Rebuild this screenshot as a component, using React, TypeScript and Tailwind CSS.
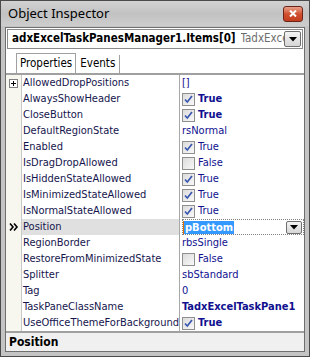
import React from 'react';

type Row = {
  name: string;
  value: string;
  check?: boolean;
  bold?: boolean;
  expand?: boolean;
  selected?: boolean;
};

const rows: Row[] = [
  { name: 'AllowedDropPositions', value: '[]', expand: true },
  { name: 'AlwaysShowHeader', value: 'True', check: true, bold: true },
  { name: 'CloseButton', value: 'True', check: true, bold: true },
  { name: 'DefaultRegionState', value: 'rsNormal' },
  { name: 'Enabled', value: 'True', check: true },
  { name: 'IsDragDropAllowed', value: 'False', check: false },
  { name: 'IsHiddenStateAllowed', value: 'True', check: true },
  { name: 'IsMinimizedStateAllowed', value: 'True', check: true },
  { name: 'IsNormalStateAllowed', value: 'True', check: true },
  { name: 'Position', value: 'pBottom', selected: true },
  { name: 'RegionBorder', value: 'rbsSingle' },
  { name: 'RestoreFromMinimizedState', value: 'False', check: false },
  { name: 'Splitter', value: 'sbStandard' },
  { name: 'Tag', value: '0' },
  { name: 'TaskPaneClassName', value: 'TadxExcelTaskPane1', bold: true },
  { name: 'UseOfficeThemeForBackground', value: 'True', check: true, bold: true },
];

const font = { fontFamily: '"DejaVu Sans Condensed", "DejaVu Sans", sans-serif' };

const CheckBox = ({ on }: { on: boolean }) => (
  <span className="w-[13px] h-[13px] border border-[#8f8f8f] bg-gradient-to-br from-[#dcdcdc] to-[#f8f8f8] flex items-center justify-center shrink-0">
    {on && (
      <svg width="9" height="9" viewBox="0 0 9 9">
        <path d="M1 4.5 L3.3 7 L8 1" stroke="#3a57b0" strokeWidth="1.7" fill="none" />
      </svg>
    )}
  </span>
);

const DropBtn = ({ className }: { className: string }) => (
  <span
    className={`flex items-center justify-center border border-[#707070] rounded-[2px] bg-gradient-to-b from-[#f4f4f4] to-[#d6d6d6] ${className}`}
  >
    <svg width="8" height="5" viewBox="0 0 8 5">
      <path d="M0 0 H8 L4 4.5 Z" fill="#000" />
    </svg>
  </span>
);

export default function App() {
  return (
    <div
      className="w-[310px] h-[357px] bg-[#c4c4c4] border border-[#4a4a4a] flex flex-col overflow-hidden"
      style={font}
    >
      {/* Title bar */}
      <div className="h-[25px] shrink-0 flex items-center justify-between pl-[7px] pr-[6px] bg-gradient-to-b from-[#d2d2d2] via-[#c2c2c2] to-[#cdcdcd]">
        <span className="text-[13px] text-black" style={{ fontFamily: '"Noto Sans", "Open Sans", sans-serif' }}>
          Object Inspector
        </span>
        <span className="w-[20px] h-[16px] rounded-[3px] border border-[#6b2418] bg-gradient-to-b from-[#e8a08a] via-[#d1502f] to-[#c23d1e] flex items-center justify-center">
          <svg width="8" height="7" viewBox="0 0 8 7">
            <path d="M1 0.5 L7 6.5 M7 0.5 L1 6.5" stroke="#fff" strokeWidth="2" />
          </svg>
        </span>
      </div>

      {/* Body */}
      <div className="flex-1 flex flex-col mx-[4px] mt-[1px] border border-[#6f6f6f] bg-white">
        {/* Object selector */}
        <div className="h-[20px] shrink-0 mx-[1px] mt-[1px] border border-[#8a8a8a] bg-white flex items-center pl-[4px] pr-[1px]">
          <span className="text-[11.5px] font-bold text-black whitespace-nowrap">
            adxExcelTaskPanesManager1.Items[0]
          </span>
          <span className="ml-[5px] text-[11.5px] text-[#6d6d6d] whitespace-nowrap overflow-hidden flex-1">
            TadxExcelTaskPanesManagerItem
          </span>
          <DropBtn className="w-[17px] h-[16px] shrink-0" />
        </div>

        {/* Tabs */}
        <div className="h-[24px] shrink-0 flex items-end pl-[10px]">
          <div className="h-[20px] px-[3px] border border-b-0 border-[#a0a0a0] bg-white flex items-center text-[11.5px] text-black">
            Properties
          </div>
          <div className="h-[18px] px-[4px] border-r border-[#a0a0a0] flex items-center text-[11.5px] text-black">
            Events
          </div>
        </div>

        {/* Grid */}
        <div className="h-[258px] shrink-0 border-t-2 border-[#a0a0a0] flex flex-col text-[11px] overflow-hidden">
          {rows.map((r) => (
            <div key={r.name} className="h-[16px] flex items-stretch">
              <div className="w-[16px] shrink-0 bg-[#f7f7f0] border-r border-[#c8c8c8] flex items-center justify-center">
                {r.expand && (
                  <span className="w-[9px] h-[9px] border border-[#808080] bg-white flex items-center justify-center">
                    <svg width="5" height="5" viewBox="0 0 5 5">
                      <path d="M0 2.5 H5 M2.5 0 V5" stroke="#000" strokeWidth="1" />
                    </svg>
                  </span>
                )}
                {r.selected && (
                  <svg width="10" height="8" viewBox="0 0 10 8">
                    <path d="M1 0.5 L4 4 L1 7.5 M5 0.5 L8 4 L5 7.5" stroke="#000" strokeWidth="1.6" fill="none" />
                  </svg>
                )}
              </div>
              <div
                className={`w-[157px] shrink-0 pl-[1px] flex items-center whitespace-nowrap overflow-hidden text-[#15154d] ${
                  r.selected ? 'bg-[#e0e0e0]' : ''
                }`}
              >
                {r.name}
              </div>
              <div className="w-[1px] bg-[#a8a8a8] shrink-0" />
              <div className="flex-1 flex items-center pl-[2px] text-[#10108f] whitespace-nowrap overflow-hidden">
                {r.selected ? (
                  <div className="flex-1 h-[16px] border border-dotted border-[#808080] flex items-center pr-[1px]">
                    <span className="bg-[#3399ff] text-white font-bold px-[1px] border-l border-[#e07000] leading-[13px]">
                      pBottom
                    </span>
                    <span className="flex-1" />
                    <DropBtn className="w-[16px] h-[13px]" />
                  </div>
                ) : (
                  <>
                    {r.check !== undefined && <CheckBox on={r.check} />}
                    <span className={`${r.check !== undefined ? 'ml-[3px]' : ''} ${r.bold ? 'font-bold' : ''}`}>
                      {r.value}
                    </span>
                  </>
                )}
              </div>
            </div>
          ))}
        </div>

        {/* Status */}
        <div className="flex-1 border-t-2 border-[#a0a0a0] bg-[#f0f0f0] flex items-center pl-[3px]">
          <span className="text-[12px] font-bold text-black">Position</span>
        </div>
      </div>
      <div className="h-[5px] shrink-0" />
    </div>
  );
}
